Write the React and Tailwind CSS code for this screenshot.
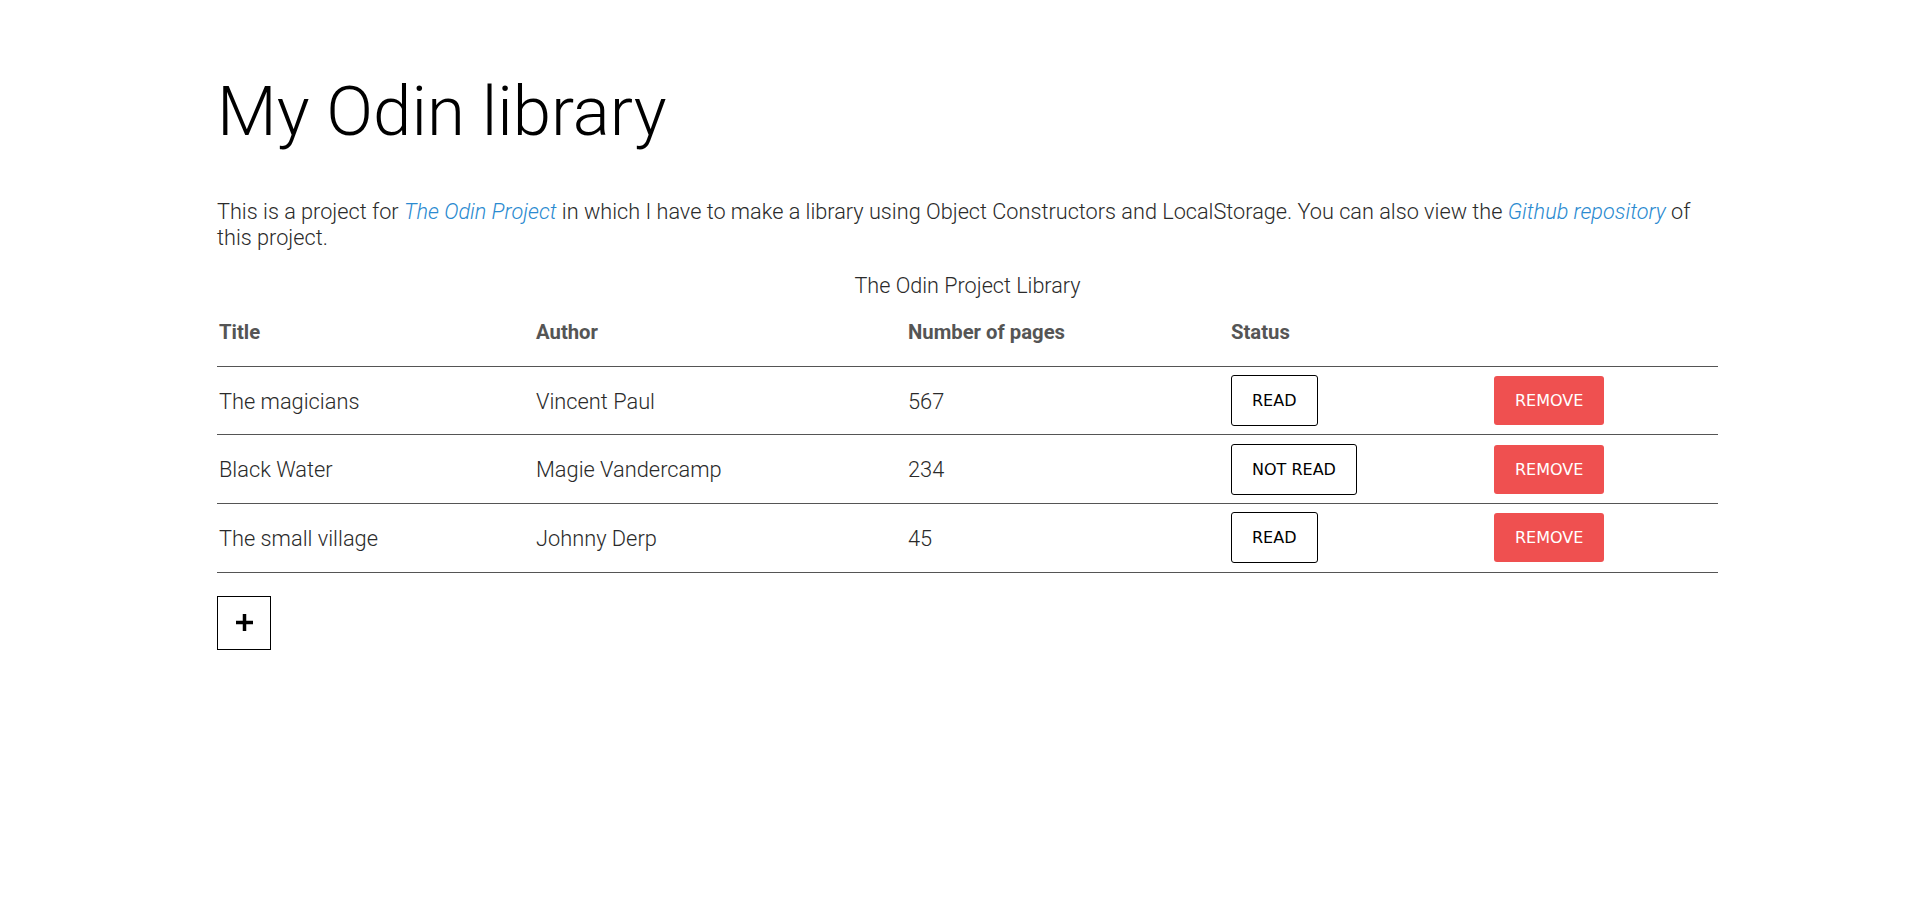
import React, { useState } from 'react';

const initialBooks = [
  { title: 'The magicians', author: 'Vincent Paul', pages: 567, read: true },
  { title: 'Black Water', author: 'Magie Vandercamp', pages: 234, read: false },
  { title: 'The small village', author: 'Johnny Derp', pages: 45, read: true },
];

function App() {
  const [books, setBooks] = useState(initialBooks);

  const toggleRead = (index) => {
    setBooks(prev => prev.map((b, i) => (i === index ? { ...b, read: !b.read } : b)));
  };

  const removeBook = (index) => {
    setBooks(prev => prev.filter((_, i) => i !== index));
  };

  return (
    <div className="min-h-screen bg-white font-['Roboto',sans-serif] font-light text-[#111]">
      <div className="ml-[217px] w-[1501px] pt-[71px]">
        {/* Header */}
        <h1 className="text-[69px] leading-[81px] font-light text-black">My Odin library</h1>

        <p className="mt-[47px] text-[21.7px] leading-[26px] text-[#2a2a2a]">
          This is a project for{' '}
          <a href="#" className="italic text-[#2a8ad0]">The Odin Project</a>{' '}
          in which I have to make a library using Object Constructors and LocalStorage. You can also view the{' '}
          <a href="#" className="italic text-[#2a8ad0]">Github repository</a> of this project.
        </p>

        {/* Library table */}
        <table className="mt-[22px] w-[1501px] table-fixed border-collapse">
          <caption className="text-[21.6px] leading-[26px] text-[#2a2a2a]">The Odin Project Library</caption>
          <colgroup>
            <col className="w-[317px]" />
            <col className="w-[372px]" />
            <col className="w-[323px]" />
            <col className="w-[263px]" />
            <col className="w-[226px]" />
          </colgroup>
          <thead>
            <tr className="h-[67px] border-b border-[#555]">
              <th className="pl-[2px] text-left text-[20.3px] font-bold text-[#555]">Title</th>
              <th className="pl-[2px] text-left text-[20.3px] font-bold text-[#555]">Author</th>
              <th className="pl-[2px] text-left text-[20.3px] font-bold text-[#555]">Number of pages</th>
              <th className="pl-[2px] text-left text-[20.3px] font-bold text-[#555]">Status</th>
              <th></th>
            </tr>
          </thead>
          <tbody>
            {books.map((book, i) => (
              <tr key={book.title} className="h-[68.7px] border-b border-[#555] text-[21.8px] text-[#2a2a2a]">
                <td className="pl-[2px] pt-[3px]">{book.title}</td>
                <td className="pl-[2px] pt-[3px]">{book.author}</td>
                <td className="pl-[2px] pt-[3px]">{book.pages}</td>
                <td className="pl-[2px]">
                  <button
                    onClick={() => toggleRead(i)}
                    className="rounded-[3px] border border-black bg-white px-[20px] py-[15px] font-['DejaVu_Sans',sans-serif] text-[16px] leading-[19px] font-normal text-black"
                  >
                    {book.read ? 'READ' : 'NOT READ'}
                  </button>
                </td>
                <td className="pl-[2px]">
                  <button
                    onClick={() => removeBook(i)}
                    className="rounded-[3px] bg-[#ef5050] px-[21px] py-[15px] font-['DejaVu_Sans',sans-serif] text-[16px] leading-[19px] font-normal text-white"
                  >
                    REMOVE
                  </button>
                </td>
              </tr>
            ))}
          </tbody>
        </table>

        <button className="mt-[23px] flex h-[54px] w-[54px] items-center justify-center border border-black bg-white">
          <svg width="17" height="17" viewBox="0 0 17 17">
            <path d="M8.5 0v17M0 8.5h17" stroke="black" strokeWidth="3.5" />
          </svg>
        </button>
      </div>
    </div>
  );
}

export default App;
